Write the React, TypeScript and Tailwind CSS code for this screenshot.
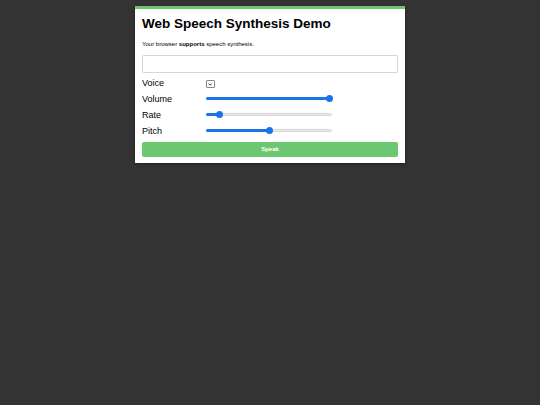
import React from 'react'

type SliderProps = { fraction: number }

function Slider({ fraction }: SliderProps) {
  // thumb travels 3px in from each end of the 126px track
  const thumb = 3 + fraction * 120
  return (
    <div className="relative h-[3px] w-[126px] rounded-full border border-[#d4d4d4] bg-[#efefef]">
      <div
        className="absolute -top-px -left-px h-[3px] rounded-full bg-[#1a73e8]"
        style={{ width: thumb + 1 }}
      />
      <div
        className="absolute top-[-3.5px] h-[7px] w-[7px] rounded-full bg-[#1a73e8]"
        style={{ left: thumb - 4.5 }}
      />
    </div>
  )
}

const rows = [
  { label: 'Volume', fraction: 1 },
  { label: 'Rate', fraction: 0.09 },
  { label: 'Pitch', fraction: 0.5 },
]

export default function App() {
  return (
    <div className="min-h-[405px] bg-[#333333] pt-[6px] font-['Liberation_Sans',Arial,sans-serif] text-black">
      <div className="mx-auto w-[270px] border-t-[3px] border-[#6cc76f] bg-white px-[7px] pt-[7px] pb-[6px] shadow-[0_1px_3px_rgba(0,0,0,0.4)]">
        <h1 className="text-[13.5px] font-bold leading-[16px]">Web Speech Synthesis Demo</h1>
        <p className="mt-[8px] text-[6px] leading-[8px]">
          Your browser <b>supports</b> speech synthesis.
        </p>
        <div className="mt-[7px] h-[18px] w-full rounded-[2px] border border-[#d6d6d6] bg-white" />

        <div className="mt-[1.5px] flex h-[16px] items-center">
          <span className="w-[64px] text-[9px] leading-[10px]">Voice</span>
          <div className="mt-[3px] flex h-[7.5px] w-[8.5px] items-center justify-center rounded-[1px] border border-[#8a8a8a] bg-white">
            <svg width="4" height="3" viewBox="0 0 4 3">
              <path d="M0.5 0.6 L2 2.2 L3.5 0.6" fill="none" stroke="#222" strokeWidth="0.9" />
            </svg>
          </div>
        </div>

        {rows.map((row) => (
          <div key={row.label} className="flex h-[16px] items-center">
            <span className="w-[64px] text-[9px] leading-[10px]">{row.label}</span>
            <Slider fraction={row.fraction} />
          </div>
        ))}

        <button className="mt-[3.5px] flex h-[15px] w-full items-center justify-center rounded-[2px] bg-[#6cc870] text-[6px] font-bold text-white">
          Speak
        </button>
      </div>
    </div>
  )
}
